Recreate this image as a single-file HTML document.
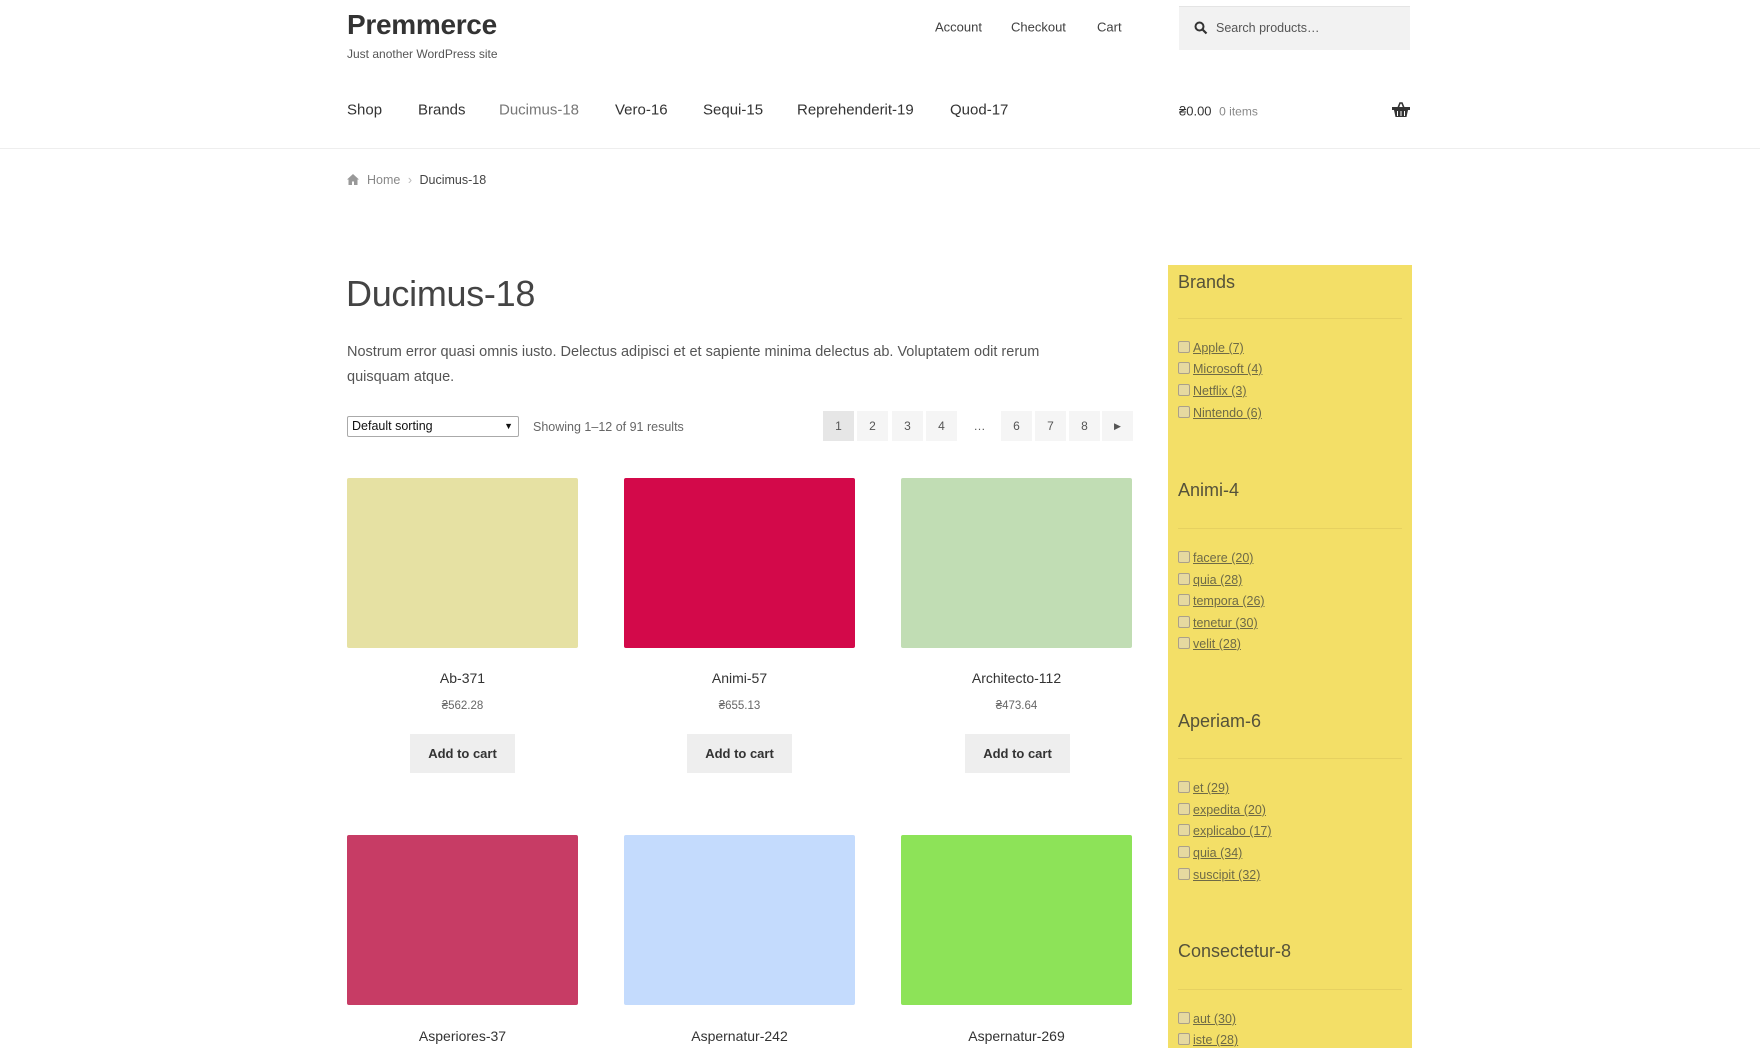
<!DOCTYPE html>
<html><head><meta charset="utf-8"><style>
*{margin:0;padding:0;box-sizing:border-box}
body{width:1760px;height:1048px;overflow:hidden;background:#fff;font-family:"Liberation Sans",sans-serif;color:#43454b;position:relative}
.a{position:absolute;white-space:nowrap}
.t{transform:translateY(-50%)}
.nav{font-size:15px;color:#333;top:110px}
.tl{font-size:13px;color:#404040;top:27px}
.pg{position:absolute;top:411px;width:31px;height:30px;background:#f5f5f5;font-size:12px;color:#555;text-align:center;line-height:30px}
.img{position:absolute;width:231px;height:170px;border-radius:2px}
.nm{position:absolute;width:231px;text-align:center;font-size:14px;color:#333}
.pr{position:absolute;width:231px;text-align:center;font-size:11.5px;color:#666}
.btn{position:absolute;width:105px;height:39px;background:#eee;font-size:13px;font-weight:bold;color:#333;text-align:center;line-height:39px}
.side{position:absolute;left:1168px;top:265px;width:244px;height:783px;background:#f3df67}
.wt{position:absolute;left:10px;font-size:18px;color:#55523a;font-weight:300}
.hr{position:absolute;left:10px;width:224px;height:1px;background:#e6d160}
.it{position:absolute;left:10px;font-size:12.5px;color:#6e6a47;text-decoration:underline}
.it i{display:inline-block;width:12px;height:12px;border:1px solid #aaa08a;background:#e6d9a0;border-radius:2px;vertical-align:-1px;margin-right:3px}
</style></head><body>
<div class="a t" style="left:347px;top:25px;font-size:28px;font-weight:bold;color:#333;letter-spacing:-0.3px">Premmerce</div>
<div class="a t" style="left:347px;top:54px;font-size:12px;color:#555">Just another WordPress site</div>
<div class="a t tl" style="left:935px">Account</div>
<div class="a t tl" style="left:1011px">Checkout</div>
<div class="a t tl" style="left:1097px">Cart</div>
<div class="a" style="left:1179px;top:6px;width:231px;height:44px;background:#f2f2f2;border-top:1px solid #e4e4e4"></div>
<svg class="a" style="left:1194px;top:21px" width="14" height="14" viewBox="0 0 14 14"><circle cx="5.5" cy="5.5" r="4" fill="none" stroke="#333" stroke-width="2"/><path d="M8.5 8.5L12.5 12.5" stroke="#333" stroke-width="2.2"/></svg>
<div class="a t" style="left:1216px;top:28px;font-size:12.5px;color:#555">Search products…</div>
<div class="a t nav" style="left:347px">Shop</div>
<div class="a t nav" style="left:418px">Brands</div>
<div class="a t nav" style="left:499px;color:#777">Ducimus-18</div>
<div class="a t nav" style="left:615px">Vero-16</div>
<div class="a t nav" style="left:703px">Sequi-15</div>
<div class="a t nav" style="left:797px">Reprehenderit-19</div>
<div class="a t nav" style="left:950px">Quod-17</div>
<div class="a t" style="left:1179px;top:111px;font-size:13px;color:#333">₴0.00 <span style="font-size:12px;color:#888;margin-left:4px">0 items</span></div>
<svg class="a" style="left:1392px;top:102px" width="18" height="16" viewBox="0 0 18 16"><path d="M6 6L8 1h2l2 5" fill="none" stroke="#333" stroke-width="1.6"/><rect x="0" y="5" width="18" height="3" fill="#333"/><path d="M2 8h14l-1.5 7h-11z" fill="#333"/><path d="M5.5 9v5M9 9v5M12.5 9v5" stroke="#fff" stroke-width="1"/></svg>
<div class="a" style="left:0;top:148px;width:1760px;height:1px;background:#eee"></div>
<svg class="a" style="left:347px;top:174px" width="12" height="11" viewBox="0 0 12 11"><path d="M6 0L0 5.5h1.5V11h3.5V7.5h2V11h3.5V5.5H12z" fill="#999"/></svg>
<div class="a t" style="left:367px;top:180px;font-size:12.5px;color:#888">Home <span style="margin:0 4px;color:#bbb">›</span> <span style="color:#444">Ducimus-18</span></div>
<div class="a t" style="left:346px;top:294px;font-size:36px;font-weight:normal;color:#444;letter-spacing:-0.3px">Ducimus-18</div>
<div class="a" style="left:347px;top:340px;width:725px;font-size:14.5px;line-height:25px;color:#555;white-space:normal">Nostrum error quasi omnis iusto. Delectus adipisci et et sapiente minima delectus ab. Voluptatem odit rerum quisquam atque.</div>
<div class="a" style="left:347px;top:416px;width:172px;height:21px;border:1px solid #aaa;border-radius:2px;font-size:12.5px;color:#111;line-height:19px;padding-left:4px">Default sorting<span style="position:absolute;right:5px;font-size:9px">▼</span></div>
<div class="a t" style="left:533px;top:427px;font-size:12.5px;color:#666">Showing 1–12 of 91 results</div>
<div class="pg" style="left:823px;background:#e6e6e6">1</div>
<div class="pg" style="left:857px">2</div>
<div class="pg" style="left:892px">3</div>
<div class="pg" style="left:926px">4</div>
<div class="pg" style="left:964px;background:none">…</div>
<div class="pg" style="left:1001px">6</div>
<div class="pg" style="left:1035px">7</div>
<div class="pg" style="left:1069px">8</div>
<div class="pg" style="left:1102px;font-size:9px">▶</div>

<div class="img" style="left:347px;top:478px;background:#e6e1a3"></div>
<div class="img" style="left:624px;top:478px;background:#d3094a"></div>
<div class="img" style="left:901px;top:478px;background:#c1ddb4"></div>
<div class="nm" style="left:347px;top:670px">Ab-371</div>
<div class="nm" style="left:624px;top:670px">Animi-57</div>
<div class="nm" style="left:901px;top:670px">Architecto-112</div>
<div class="pr" style="left:347px;top:700px">₴562.28</div>
<div class="pr" style="left:624px;top:700px">₴655.13</div>
<div class="pr" style="left:901px;top:700px">₴473.64</div>
<div class="btn" style="left:410px;top:734px">Add to cart</div>
<div class="btn" style="left:687px;top:734px">Add to cart</div>
<div class="btn" style="left:965px;top:734px">Add to cart</div>
<div class="img" style="left:347px;top:835px;background:#c73c65"></div>
<div class="img" style="left:624px;top:835px;background:#c4dbfd"></div>
<div class="img" style="left:901px;top:835px;background:#8de358"></div>
<div class="nm" style="left:347px;top:1028px">Asperiores-37</div>
<div class="nm" style="left:624px;top:1028px">Aspernatur-242</div>
<div class="nm" style="left:901px;top:1028px">Aspernatur-269</div>

<div class="side">
<div class="wt" style="top:7px">Brands</div>
<div class="hr" style="top:53px"></div>
<div class="it" style="top:76px"><i></i>Apple (7)</div>
<div class="it" style="top:97px"><i></i>Microsoft (4)</div>
<div class="it" style="top:119px"><i></i>Netflix (3)</div>
<div class="it" style="top:141px"><i></i>Nintendo (6)</div>
<div class="wt" style="top:215px">Animi-4</div>
<div class="hr" style="top:263px"></div>
<div class="it" style="top:286px"><i></i>facere (20)</div>
<div class="it" style="top:308px"><i></i>quia (28)</div>
<div class="it" style="top:329px"><i></i>tempora (26)</div>
<div class="it" style="top:351px"><i></i>tenetur (30)</div>
<div class="it" style="top:372px"><i></i>velit (28)</div>
<div class="wt" style="top:446px">Aperiam-6</div>
<div class="hr" style="top:493px"></div>
<div class="it" style="top:516px"><i></i>et (29)</div>
<div class="it" style="top:538px"><i></i>expedita (20)</div>
<div class="it" style="top:559px"><i></i>explicabo (17)</div>
<div class="it" style="top:581px"><i></i>quia (34)</div>
<div class="it" style="top:603px"><i></i>suscipit (32)</div>
<div class="wt" style="top:676px">Consectetur-8</div>
<div class="hr" style="top:724px"></div>
<div class="it" style="top:747px"><i></i>aut (30)</div>
<div class="it" style="top:768px"><i></i>iste (28)</div>
</div>
</body></html>
